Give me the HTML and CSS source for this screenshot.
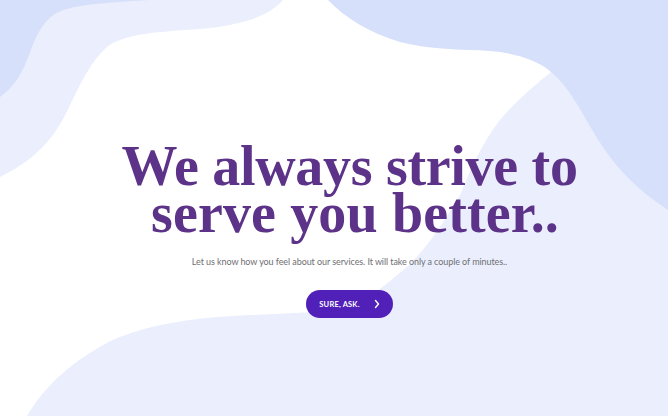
FILE: index.html
```html
<!DOCTYPE html>
<html lang="en">
<head>
<meta charset="utf-8">
<title>Survey</title>
<link rel="stylesheet" href="styles.css">
</head>
<body>
<div class="page">
  <svg class="bg" width="668" height="416" viewBox="0 0 668 416" aria-hidden="true">
    <path class="blob-light" d="M0 0 L283 0 C270 15 245 25 200 29 C160 32 125 33 107 47 C90 62 80 85 70 105 C58 132 40 158 0 177 Z"/>
    <path class="blob-dark" d="M150 0 C100 3 70 5 55 14 C42 22 35 38 29 55 C22 74 14 87 0 97 L0 0 Z"/>
    <path class="blob-light" d="M551 72 C535 85 515 102 500 120 C482 143 470 170 461 193 C450 212 425 255 397 275 C378 292 358 305 334 311 C300 313 270 314 233 316 C190 318 150 325 117 338 C75 358 45 385 27 416 L668 416 L668 60 Z"/>
    <path class="blob-dark" d="M328 0 C345 18 370 33 400 42 C430 50 460 49 490 51 C515 53 538 60 551 72 C570 88 580 110 594 133 C610 160 630 185 668 210 L668 0 Z"/>
  </svg>
  <main class="hero">
    <h1 class="title"><span class="title-line">We always strive to</span><span class="title-line title-line-2">serve you better..</span></h1>
    <p class="lead">Let us know how you feel about our services. It will take only a couple of minutes..</p>
    <a class="cta" href="#">
      <span class="cta-label">SURE, ASK.</span>
      <svg class="cta-icon" width="6" height="10" viewBox="0 0 6 10" aria-hidden="true"><polyline points="1.5,1.5 4.5,5 1.5,8.5"/></svg>
    </a>
  </main>
</div>
</body>
</html>
```
FILE: styles.css
```css
html, body {
  margin: 0;
  padding: 0;
  background: #ffffff;
}

.page {
  position: relative;
  width: 668px;
  height: 416px;
  overflow: hidden;
  background: #ffffff;
}

.bg {
  position: absolute;
  left: 0;
  top: 0;
  display: block;
}

.blob-light {
  fill: #ebeffd;
}

.blob-dark {
  fill: #d7e0fa;
}

.hero {
  position: relative;
  display: flex;
  flex-direction: column;
  align-items: center;
  padding: 143px 0 0 31px;
}

.title {
  margin: 0;
  display: flex;
  flex-direction: column;
  align-items: center;
  font-family: "Liberation Serif", "Times New Roman", serif;
  font-weight: 700;
  font-size: 56px;
  line-height: 47px;
  letter-spacing: -0.3px;
  color: #5c3388;
  text-align: center;
  white-space: nowrap;
}

.title-line-2 {
  letter-spacing: 0.15px;
  margin-left: 11px;
}

.lead {
  margin: 18px 0 0;
  font-family: Lato, "Liberation Sans", sans-serif;
  font-size: 9px;
  line-height: 14px;
  letter-spacing: -0.08px;
  color: #6f6f73;
  text-align: center;
}

.cta {
  margin-top: 21px;
  display: inline-flex;
  align-items: center;
  gap: 14px;
  height: 28px;
  box-sizing: border-box;
  padding: 0 13px 0 13px;
  border-radius: 14px;
  background: #5020b8;
  text-decoration: none;
}

.cta-label {
  font-family: Lato, "Liberation Sans", sans-serif;
  font-weight: 700;
  font-size: 7.5px;
  letter-spacing: 0.2px;
  color: #ffffff;
}

.cta-icon {
  display: block;
}

.cta-icon polyline {
  fill: none;
  stroke: #ffffff;
  stroke-width: 1.4;
  stroke-linecap: round;
  stroke-linejoin: round;
}
```
